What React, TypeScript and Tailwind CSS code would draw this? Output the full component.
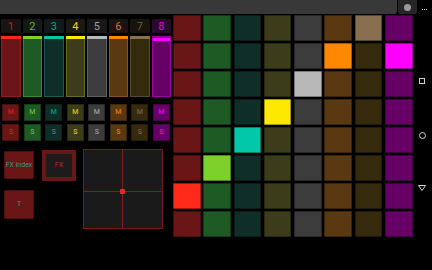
import React from "react";

type Track = {
  n: string;
  numBg: string;
  numText: string;
  body: string;
  band: string;
  border: string;
  mText: string;
};

const tracks: Track[] = [
  { n: "1", numBg: "bg-[#1a1313]", numText: "text-[#c41818]", body: "bg-[#6b1616]", band: "bg-[#ff2a1a]", border: "border-[#8c1e1e]", mText: "text-[#e02020]" },
  { n: "2", numBg: "bg-[#131a13]", numText: "text-[#6cb42a]", body: "bg-[#1e5a24]", band: "bg-[#7ed02a]", border: "border-[#3a8a2c]", mText: "text-[#7ed02a]" },
  { n: "3", numBg: "bg-[#111a18]", numText: "text-[#00a890]", body: "bg-[#0f2e28]", band: "bg-[#00c8a8]", border: "border-[#1a5a4c]", mText: "text-[#00b098]" },
  { n: "4", numBg: "bg-[#1a1a11]", numText: "text-[#e8d800]", body: "bg-[#3c3c1a]", band: "bg-[#ffe800]", border: "border-[#6a6a1e]", mText: "text-[#f0e000]" },
  { n: "5", numBg: "bg-[#181818]", numText: "text-[#a0a0a0]", body: "bg-[#3c3c3c]", band: "bg-[#b8b8b8]", border: "border-[#606060]", mText: "text-[#b0b0b0]" },
  { n: "6", numBg: "bg-[#1a1510]", numText: "text-[#e07800]", body: "bg-[#5a3812]", band: "bg-[#ff8800]", border: "border-[#8a5210]", mText: "text-[#ff8800]" },
  { n: "7", numBg: "bg-[#16140c]", numText: "text-[#6c5a3a]", body: "bg-[#352a0c]", band: "bg-[#8a6e50]", border: "border-[#5a4a2a]", mText: "text-[#8a6e50]" },
  { n: "8", numBg: "bg-[#2a0a2a]", numText: "text-[#e000e0]", body: "bg-[#660066]", band: "bg-[#ff00ff]", border: "border-[#a000a0]", mText: "text-[#ff00ff]" },
];

const gridDim = [
  "bg-[#6b1616]",
  "bg-[#1e5a24]",
  "bg-[#0f2e28]",
  "bg-[#3c3c1a]",
  "bg-[#3c3c3c]",
  "bg-[#5a3812]",
  "bg-[#352a0c]",
  "bg-[#660066]",
];

const gridLit = [
  "bg-[#ff2a1a]",
  "bg-[#7ed02a]",
  "bg-[#00c8a8]",
  "bg-[#ffe800]",
  "bg-[#b8b8b8]",
  "bg-[#ff8800]",
  "bg-[#8a6e50]",
  "bg-[#ff00ff]",
];

const litMap: number[][] = [[6], [5, 7], [4], [3], [2], [1], [0], []];

const font = { fontFamily: "Roboto, 'Liberation Sans', sans-serif" };

export default function App() {
  return (
    <div className="w-[432px] h-[270px] bg-black flex flex-col overflow-hidden" style={font}>
      {/* top bar */}
      <div className="h-[14px] flex shrink-0">
        <div className="w-[397px] h-[14px] bg-[#383838] rounded-br-[3px]" />
        <div className="w-[19px] h-[14px] bg-[#262626] flex items-center justify-center ml-[1px] rounded-b-[2px]">
          <div className="w-[7px] h-[7px] rounded-full bg-[#9a9a9a]" />
        </div>
        <div className="flex-1 flex items-end justify-center pb-[4px] gap-[1px]">
          <div className="w-[1px] h-[1px] bg-[#cfcfcf]" />
          <div className="w-[1px] h-[1px] bg-[#cfcfcf]" />
          <div className="w-[1px] h-[1px] bg-[#cfcfcf]" />
        </div>
      </div>

      <div className="flex flex-1">
        {/* left panel */}
        <div className="w-[173px] pl-[1px] flex flex-col">
          {/* numbers */}
          <div className="grid grid-cols-8 gap-x-[2px] w-[170px] mt-[5px] h-[14px]">
            {tracks.map((t) => (
              <div key={t.n} className={`${t.numBg} ${t.numText} flex items-center justify-center text-[11px] leading-none rounded-[1px]`}>
                {t.n}
              </div>
            ))}
          </div>
          {/* faders */}
          <div className="grid grid-cols-8 gap-x-[2px] w-[170px] mt-[3px] h-[61px]">
            {tracks.map((t, i) => (
              <div key={t.n} className={`${t.body} ${t.border} border-[1px] border-t-0 flex flex-col`}>
                {i === 7 ? (
                  <>
                    <div className={`h-[2px] border-t-[1px] ${t.border}`} />
                    <div className={`${t.band} h-[3px]`} />
                  </>
                ) : (
                  <div className={`${t.band} h-[3px] -mx-[1px]`} />
                )}
              </div>
            ))}
          </div>
          {/* M row */}
          <div className="grid grid-cols-8 gap-x-[2px] w-[170px] mt-[7px] h-[17px]">
            {tracks.map((t) => (
              <div key={t.n} className="flex justify-center">
                <div className={`${t.body} ${t.mText} w-[17px] h-[17px] flex items-center justify-center text-[7px] leading-none border-[1px] border-black/30`}>
                  M
                </div>
              </div>
            ))}
          </div>
          {/* S row */}
          <div className="grid grid-cols-8 gap-x-[2px] w-[170px] mt-[3px] h-[17px]">
            {tracks.map((t) => (
              <div key={t.n} className="flex justify-center">
                <div className={`${t.body} ${t.mText} w-[17px] h-[17px] flex items-center justify-center text-[7px] leading-none border-[1px] border-black/30`}>
                  S
                </div>
              </div>
            ))}
          </div>
          {/* bottom controls */}
          <div className="flex items-start mt-[8px]">
            <div className="flex flex-col ml-[3px] mt-[2px]">
              <div className="w-[30px] h-[28px] bg-[#6b1616] border-[1px] border-black/30 flex items-center justify-center text-[7px] leading-none text-[#2a9a8a] whitespace-nowrap">
                FX index
              </div>
              <div className="w-[30px] h-[29px] bg-[#6b1616] border-[1px] border-black/30 flex items-center justify-center text-[7px] leading-none text-[#2a9a8a] mt-[11px]">
                T
              </div>
            </div>
            <div className="ml-[8px] mt-[1px] w-[34px] h-[31px] bg-[#6b1616] p-[4px] flex">
              <div className="flex-1 bg-[#1c1c1c] flex items-center justify-center text-[7px] leading-none text-[#d02020]">
                FX
              </div>
            </div>
            <div className="ml-[7px] relative w-[80px] h-[80px] bg-[#1a1a1a] border-[1px] border-[#7a1616]">
              <div className="absolute left-[38px] top-0 bottom-0 w-[1px] bg-[#8c1a1a]" />
              <div className="absolute top-[41px] left-0 right-0 h-[1px] bg-[#8c1a1a]" />
              <div className="absolute left-[36px] top-[39px] w-[5px] h-[5px] rounded-[1px] bg-[#ff2020]" />
            </div>
          </div>
        </div>

        {/* pad grid */}
        <div className="mt-[1px] grid grid-cols-[repeat(8,27.5px)] grid-rows-[repeat(8,26px)] gap-x-[2.8px] gap-y-[2px] h-[222px]">
          {litMap.map((lits, r) =>
            gridDim.map((dim, c) => {
              const lit = lits.includes(c);
              return (
                <div
                  key={`${r}-${c}`}
                  className={`${lit ? gridLit[c] : dim} border-[1px] border-black/35 rounded-[1px]`}
                />
              );
            })
          )}
        </div>

        {/* nav bar */}
        <div className="flex-1 flex flex-col items-center text-[#d0d0d0]">
          <div className="mt-[64px] w-[6px] h-[6px] border-[1px] border-[#d0d0d0]" />
          <div className="mt-[48px] w-[7px] h-[7px] rounded-full border-[1px] border-[#d0d0d0]" />
          <svg className="mt-[46px]" width="8" height="6" viewBox="0 0 8 6">
            <polygon points="0.5,0.5 7.5,0.5 4,5.5" fill="none" stroke="#d0d0d0" strokeWidth="1" />
          </svg>
        </div>
      </div>
    </div>
  );
}
